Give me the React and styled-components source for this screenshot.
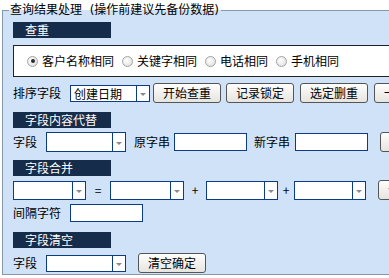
import styled, { createGlobalStyle } from 'styled-components';

const GlobalStyle = createGlobalStyle`
  html, body {
    margin: 0;
    padding: 0;
    background: #fff;
  }
  body {
    font-family: "Noto Sans CJK SC", "Noto Sans", sans-serif;
    font-size: 12px;
    color: #000;
  }
`;

const Page = styled.div`
  width: 389px;
  height: 278px;
  overflow: hidden;
  background: #fff;
`;

const Panel = styled.fieldset`
  width: 420px;
  margin: 2px 0 0 2px;
  padding: 3px 0 2px 10px;
  border: 1px solid #8597a9;
  background: #cfe2f7;
  box-sizing: border-box;
  min-width: 0;

  & legend {
    font-family: "DejaVu Sans", "Noto Sans CJK SC", sans-serif;
    font-size: 12px;
    line-height: 16px;
    padding: 0 2px 0 1px;
    margin-left: -4px;
    white-space: pre;
  }
`;

const Body = styled.div`
  display: flex;
  flex-direction: column;
`;

const Title = styled.div`
  width: 98px;
  height: 16px;
  margin-top: ${(p) => p.$top}px;
  padding-left: 12px;
  box-sizing: border-box;
  background: #162c4b;
  color: #fff;
  line-height: 16px;
`;

const RadioBox = styled.div`
  margin-top: 7px;
  height: 32px;
  box-sizing: border-box;
  border: 1px solid #222;
  background: #fff;
  display: flex;
  align-items: center;
  gap: 8px;
  padding-left: 13px;
`;

const RadioItem = styled.label`
  display: flex;
  align-items: center;
  line-height: 16px;
`;

const Radio = styled.span`
  width: 9px;
  height: 9px;
  margin-right: 4px;
  border-radius: 50%;
  border: 1px solid #a3a3a3;
  background: radial-gradient(circle at 40% 40%, #fff, #dadada);
  display: inline-flex;
  align-items: center;
  justify-content: center;

  &::after {
    content: '';
    width: 4px;
    height: 4px;
    border-radius: 50%;
    background: ${(p) => (p.$on ? '#2a2a2a' : 'transparent')};
  }
`;

const Row = styled.div`
  display: flex;
  align-items: center;
  height: ${(p) => p.$h || 20}px;
  margin-top: ${(p) => p.$top}px;
`;

const Label = styled.span`
  flex-shrink: 0;
  margin-right: ${(p) => p.$gap || 0}px;
  line-height: 16px;
`;

const Op = styled.span`
  flex-shrink: 0;
  width: ${(p) => p.$w}px;
  text-align: center;
  line-height: 16px;
`;

const Select = styled.div`
  flex-shrink: 0;
  width: ${(p) => p.$w}px;
  height: ${(p) => p.$h || 19}px;
  margin-right: ${(p) => p.$gap || 0}px;
  box-sizing: border-box;
  border: 1px solid #0c3c84;
  background: #fff;
  display: flex;
`;

const SelectText = styled.span`
  flex: 1;
  padding-left: 3px;
  line-height: 15px;
`;

const Arrow = styled.span`
  width: 12px;
  border-left: 1px solid #0c3c84;
  display: flex;
  align-items: center;
  justify-content: center;

  &::after {
    content: '';
    margin-top: 2px;
    border-left: 3px solid transparent;
    border-right: 3px solid transparent;
    border-top: 3px solid #8a8a8a;
  }
`;

const Input = styled.div`
  flex-shrink: 0;
  width: 73px;
  height: 18px;
  margin-right: ${(p) => p.$gap || 0}px;
  box-sizing: border-box;
  border: 1px solid #0c3c84;
  background: #fff;
`;

const Button = styled.button`
  flex-shrink: 0;
  height: 20px;
  margin-right: ${(p) => p.$gap || 0}px;
  padding: 0 9px;
  font: inherit;
  font-size: 12px;
  line-height: 18px;
  color: #000;
  border: 1px solid #555;
  border-radius: 3px;
  background: linear-gradient(#fefefe, #e6e4de);
`;

const DropDown = ({ w, h, gap, value }) => (
  <Select $w={w} $h={h} $gap={gap}>
    <SelectText>{value}</SelectText>
    <Arrow />
  </Select>
);

const radios = ['客户名称相同', '关键字相同', '电话相同', '手机相同'];

export default function App() {
  return (
    <Page>
      <GlobalStyle />
      <Panel>
        <legend>查询结果处理  (操作前建议先备份数据)</legend>
        <Body>
          <Title $top={1}>查重</Title>
          <RadioBox>
            {radios.map((r, i) => (
              <RadioItem key={r}>
                <Radio $on={i === 0} />
                {r}
              </RadioItem>
            ))}
          </RadioBox>

          <Row $top={6}>
            <Label $gap={9}>排序字段</Label>
            <DropDown w={80} h={17} gap={3} value="创建日期" />
            <Button $gap={5}>开始查重</Button>
            <Button $gap={6}>记录锁定</Button>
            <Button $gap={6}>选定删重</Button>
            <Button>一键删重</Button>
          </Row>

          <Title $top={9}>字段内容代替</Title>
          <Row $top={4}>
            <Label $gap={9}>字段</Label>
            <DropDown w={80} h={20} gap={8} />
            <Label $gap={4}>原字串</Label>
            <Input $gap={7} />
            <Label $gap={5}>新字串</Label>
            <Input $gap={12} />
            <Button>替换确定</Button>
          </Row>

          <Title $top={8}>字段合并</Title>
          <Row $top={4}>
            <DropDown w={73} />
            <Op $w={24}>=</Op>
            <DropDown w={74} />
            <Op $w={22}>+</Op>
            <DropDown w={72} />
            <Op $w={16}>+</Op>
            <DropDown w={72} gap={12} />
            <Button>合并确定</Button>
          </Row>
          <Row $top={4} $h={18}>
            <Label $gap={9}>间隔字符</Label>
            <Input />
          </Row>

          <Title $top={10}>字段清空</Title>
          <Row $top={6} $h={18}>
            <Label $gap={9}>字段</Label>
            <DropDown w={80} h={17} gap={12} />
            <Button>清空确定</Button>
          </Row>
        </Body>
      </Panel>
    </Page>
  );
}
